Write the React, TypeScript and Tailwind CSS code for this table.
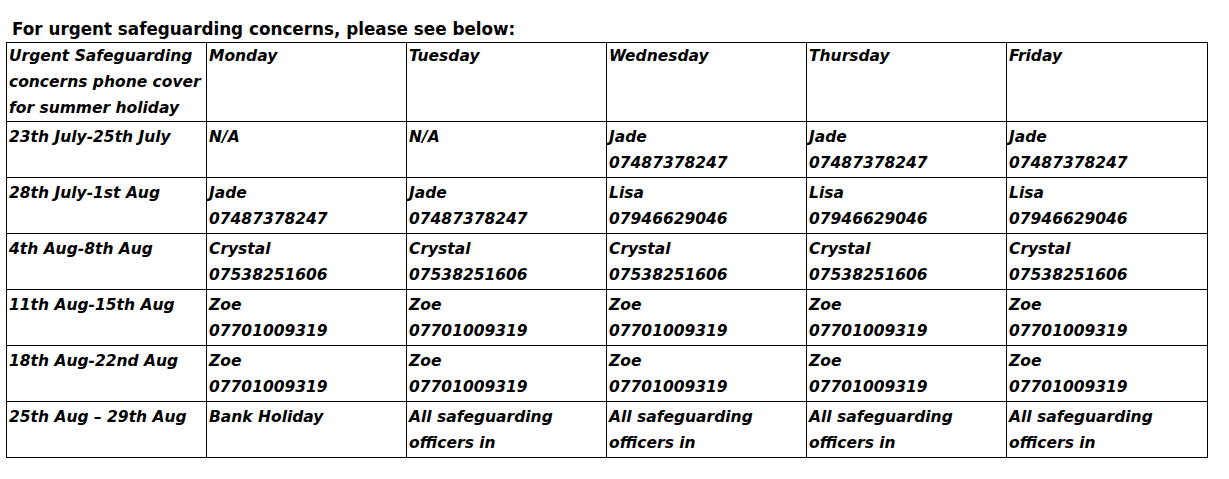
const rows = [
  {
    week: "23th July-25th July",
    days: [["N/A"], ["N/A"], ["Jade", "07487378247"], ["Jade", "07487378247"], ["Jade", "07487378247"]],
  },
  {
    week: "28th July-1st Aug",
    days: [["Jade", "07487378247"], ["Jade", "07487378247"], ["Lisa", "07946629046"], ["Lisa", "07946629046"], ["Lisa", "07946629046"]],
  },
  {
    week: "4th Aug-8th Aug",
    days: [["Crystal", "07538251606"], ["Crystal", "07538251606"], ["Crystal", "07538251606"], ["Crystal", "07538251606"], ["Crystal", "07538251606"]],
  },
  {
    week: "11th Aug-15th Aug",
    days: [["Zoe", "07701009319"], ["Zoe", "07701009319"], ["Zoe", "07701009319"], ["Zoe", "07701009319"], ["Zoe", "07701009319"]],
  },
  {
    week: "18th Aug-22nd Aug",
    days: [["Zoe", "07701009319"], ["Zoe", "07701009319"], ["Zoe", "07701009319"], ["Zoe", "07701009319"], ["Zoe", "07701009319"]],
  },
  {
    week: "25th Aug – 29th Aug",
    days: [["Bank Holiday"], ["All safeguarding", "officers in"], ["All safeguarding", "officers in"], ["All safeguarding", "officers in"], ["All safeguarding", "officers in"]],
  },
];

const dayNames = ["Monday", "Tuesday", "Wednesday", "Thursday", "Friday"];

const Cell = ({ lines, top }: { lines: string[]; top?: boolean }) => (
  <td className={`border border-black align-top pl-[2px] pr-0 pb-0 whitespace-nowrap ${top ? "pt-0" : "pt-[2px]"}`}>
    {lines.map((l, i) => (
      <div key={i}>{l}</div>
    ))}
  </td>
);

export default function App() {
  return (
    <div className="w-[1229px] h-[479px] bg-white text-black font-['DejaVu_Sans',sans-serif] text-[15.5px] leading-[26px]">
      <div className="pt-[16px] pl-[12px] font-bold text-[16.8px]">For urgent safeguarding concerns, please see below:</div>
      <table className="ml-[6px] table-fixed border-collapse w-[1201px] font-bold italic">
        <colgroup>
          <col className="w-[200px]" />
          <col className="w-[200px]" />
          <col className="w-[200px]" />
          <col className="w-[200px]" />
          <col className="w-[200px]" />
          <col className="w-[201px]" />
        </colgroup>
        <tbody>
          <tr className="h-[78px]">
            <Cell top lines={["Urgent Safeguarding", "concerns phone cover", "for summer holiday"]} />
            {dayNames.map((d) => (
              <Cell top key={d} lines={[d]} />
            ))}
          </tr>
          {rows.map((r) => (
            <tr key={r.week} className="h-[56px]">
              <Cell lines={[r.week]} />
              {r.days.map((d, i) => (
                <Cell key={i} lines={d} />
              ))}
            </tr>
          ))}
        </tbody>
      </table>
    </div>
  );
}
